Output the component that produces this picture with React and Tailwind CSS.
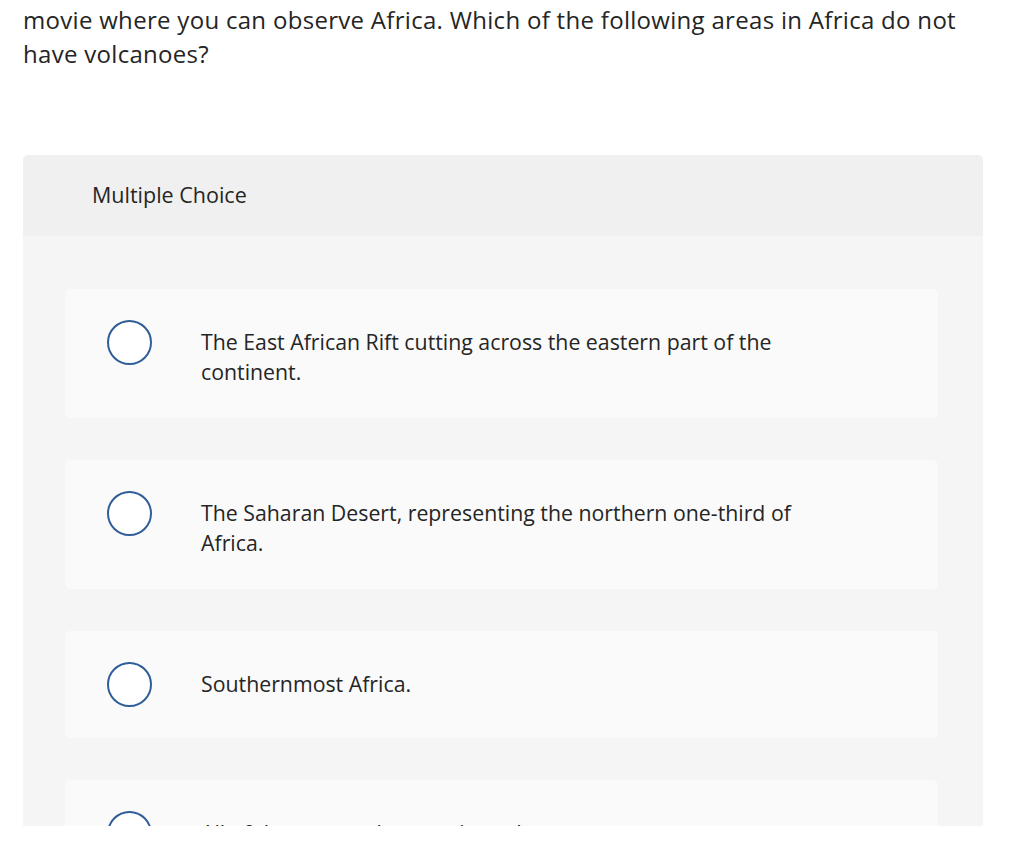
import React from "react";

const options = [
  "The East African Rift cutting across the eastern part of the continent.",
  "The Saharan Desert, representing the northern one-third of Africa.",
  "Southernmost Africa.",
  "All of these areas have active volcanoes.",
];

function Radio() {
  return (
    <span className="block w-[45px] h-[45px] shrink-0 rounded-full border-2 border-[#2f5e98] bg-white" />
  );
}

export default function App() {
  return (
    <div
      className="h-[826px] overflow-hidden bg-white text-[#252525]"
      style={{ fontFamily: "'Open Sans', Lato, sans-serif" }}
    >
      {/* Question stem */}
      <p className="pl-[23px] pr-[40px] pt-[3px] text-[24px] leading-[34px] tracking-[0.3px]">
        movie where you can observe Africa. Which of the following areas in Africa do not
        have volcanoes?
      </p>

      {/* Question panel */}
      <div className="mt-[84px] ml-[23px] w-[960px] rounded-t-[5px] overflow-hidden">
        <div className="h-[81px] bg-[#f0f0f0] pl-[69px] flex items-center">
          <span className="text-[21.5px]">Multiple Choice</span>
        </div>

        <div className="bg-[#f5f5f5] pt-[53px] pb-[40px] pl-[42px] pr-[45px] flex flex-col gap-[42px]">
          {options.map((text) => (
            <label
              key={text}
              className="flex items-start rounded-[5px] bg-[#fafafa] pl-[42px] py-[31px]"
            >
              <Radio />
              <span className="ml-[49px] mt-[7px] max-w-[620px] text-[21.3px] leading-[30px]">
                {text}
              </span>
            </label>
          ))}
        </div>
      </div>
    </div>
  );
}
